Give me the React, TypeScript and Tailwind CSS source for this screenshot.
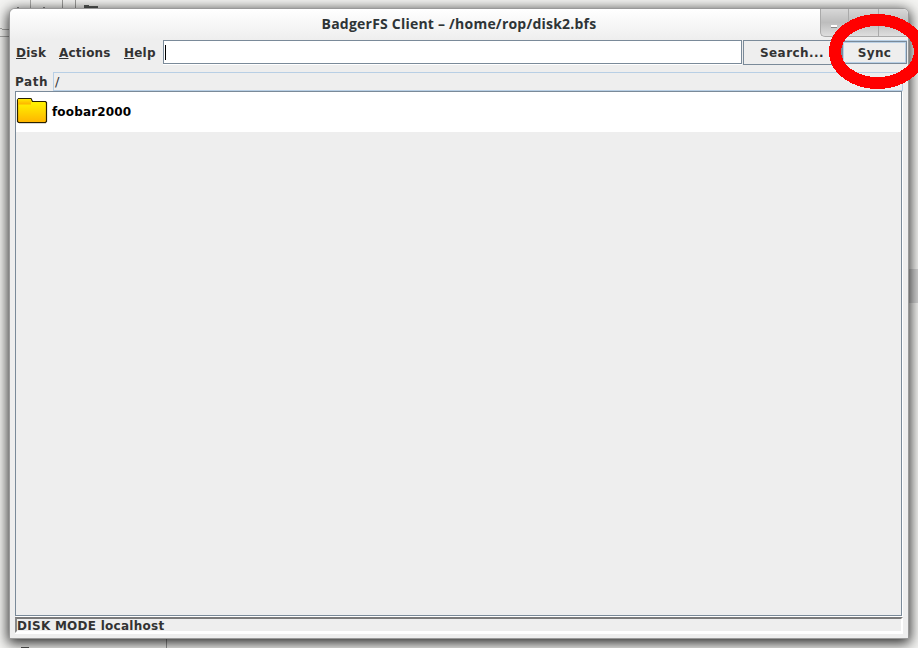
const menus = [
  { name: "Disk", box: "w-[43px]" },
  { name: "Actions", box: "w-[65px]" },
  { name: "Help", box: "w-[39px]" },
];

function Desktop() {
  return (
    <svg className="absolute inset-0" width="918" height="648" shapeRendering="crispEdges">
      <rect width="918" height="648" fill="#f4f4f2" />
      <path d="M30.5 0V9M0 36.500H10M2 29.500H10M0 28.500H2" stroke="#a9a9a7" />
      <path d="M62.500 0V9M75.500 0V9" stroke="#9b9b99" />
      <path d="M84 9V5h5v1h9v2H84z" fill="#585b59" />
      <path d="M17 7.500h2M43 7.500h2" stroke="#888" />
      <rect x="908" y="269" width="10" height="34" fill="#d4d4d4" />
      <path d="M166.500 638V648" stroke="#999" />
      <rect x="21" y="647" width="8" height="1" fill="#555" />
    </svg>
  );
}

function FolderIcon() {
  return (
    <svg width="32" height="28" viewBox="0 0 32 28" className="mb-[2px] shrink-0">
      <defs>
        <linearGradient id="folder" x1="0" y1="0" x2="0" y2="1">
          <stop offset="0.200" stopColor="#fff000" />
          <stop offset="1" stopColor="#ffb400" />
        </linearGradient>
        <linearGradient id="tab" x1="0" y1="0" x2="0" y2="1">
          <stop offset="0" stopColor="#ffe800" />
          <stop offset="1" stopColor="#ffb000" />
        </linearGradient>
      </defs>
      <path d="M1.500 3 2.500 1.500H15L16.500 4.500H29.500L30.500 5.500V24.500L29.500 25.500H2.500L1.500 24.500Z" fill="url(#folder)" stroke="#292000" strokeWidth="1.200" />
      <path d="M2 2.200H15V7.500H2Z" fill="url(#tab)" />
      <path d="M3 26.500H30" stroke="#bbb" strokeWidth="0.600" />
    </svg>
  );
}

export default function App() {
  return (
    <div className="relative h-[648px] w-[918px] overflow-hidden font-['DejaVu_Sans','Liberation_Sans',sans-serif] text-[12px] font-bold text-[#333]">
      <Desktop />
      <div className="absolute left-[9px] top-[8px] flex h-[631px] w-[900px] flex-col rounded-t-[6px] border border-[#999] bg-[#eee] shadow-[0_3px_13px_1px_rgba(0,0,0,0.85)]">
        <header className="relative flex h-[31px] shrink-0 justify-center rounded-t-[5px] bg-gradient-to-b from-white to-[#eee]">
          <h1 className="flex h-[29px] items-center whitespace-nowrap font-['Open_Sans','Noto_Sans',sans-serif] text-[14px] font-bold tracking-[0.22px] text-[#2e3436]">BadgerFS Client – /home/rop/disk2.bfs</h1>
          <div className="absolute right-0 top-0 flex h-[28px] w-[88px] overflow-hidden rounded-bl-[5px] rounded-tr-[5px] border-b border-l border-[#aaa] bg-gradient-to-b from-[#d8d8d8] via-[#bdbdbd] to-[#dedede]">
            <div className="w-[28px] border-r border-[#aaa] pl-[10px] pt-[16px]"><div className="h-[3px] w-[6px] border-b border-[#888] bg-white" /></div>
            <div className="w-[30px] border-r border-[#aaa]" />
          </div>
        </header>

        <div className="flex h-[25px] shrink-0 pl-[6px]">
          <nav className="flex w-[147px] shrink-0 items-center tracking-[0.22px]">
            {menus.map(({ name, box }) => (
              <div key={name} className={`${box} shrink-0 whitespace-nowrap`}>
                <span className="underline decoration-1 underline-offset-1">{name[0]}</span>{name.slice(1)}
              </div>
            ))}
          </nav>
          <div className="h-[24px] w-[579px] shrink-0 border border-[#7a8a99] bg-white pl-px pt-[4px] shadow-[0_1px_0_white]">
            <div className="h-[15px] w-px bg-black" />
          </div>
          <div className="ml-px flex h-[25px] w-[99px] shrink-0 items-center border border-[#7a8a99] pl-[16px] tracking-[0.42px]">Search...</div>
          <div className="mt-px flex h-[23px] w-[65px] shrink-0 items-center justify-center border border-[#7a8a99] tracking-[0.3px] shadow-[inset_0_0_0_1px_#b8cfe5,0_-1px_0_#b8cfe5]">Sync</div>
        </div>

        <div className="mt-[7px] flex h-[19px] shrink-0 pl-[5px]">
          <div className="w-[38px] shrink-0 leading-[21px] tracking-[0.6px]">Path</div>
          <div className="h-[19px] w-[850px] border border-[#b8cfe5] pl-px text-[13px] font-normal leading-[18px]">/</div>
        </div>

        <main className="ml-[5px] h-[525px] w-[887px] shrink-0 border border-[#7a8a99] shadow-[1px_1px_0_white]">
          <div className="flex h-[40px] items-center gap-[4px] bg-white text-black">
            <FolderIcon />
            <span className="tracking-[0.15px]">foobar2000</span>
          </div>
        </main>
        <footer className="ml-[5px] mt-px h-[16px] w-[888px] shrink-0 border-2 border-b-white border-l-[#888] border-r-white border-t-[#7b7b7b] leading-[15px] tracking-[0.27px] shadow-[0_1px_0_white]">DISK MODE localhost</footer>
      </div>
      <svg className="pointer-events-none absolute right-0 top-0" width="98" height="100" viewBox="820 0 98 100" shapeRendering="crispEdges">
        <ellipse cx="877.500" cy="51.500" rx="42.500" ry="31.500" fill="none" stroke="#f00" strokeWidth="12" />
      </svg>
    </div>
  );
}
